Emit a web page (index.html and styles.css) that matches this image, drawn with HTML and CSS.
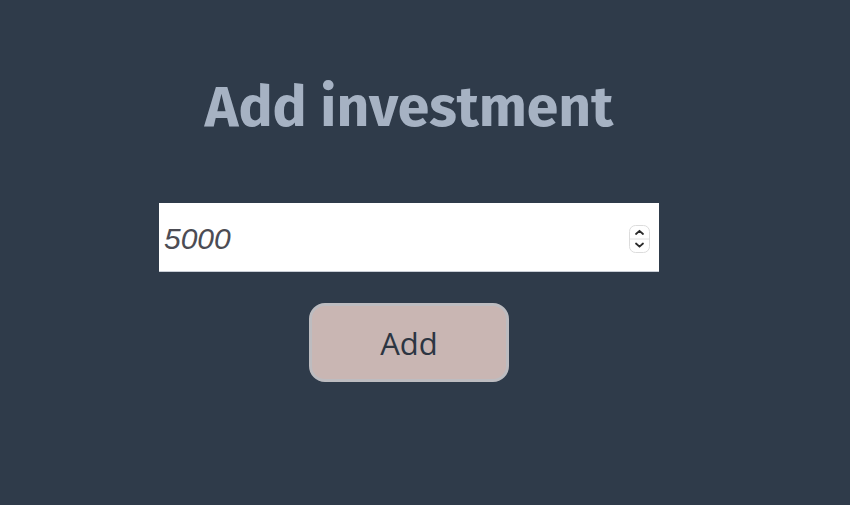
FILE: index.html
```html
<!DOCTYPE html>
<html>
<head>
<meta charset="utf-8">
<link rel="stylesheet" href="styles.css">
</head>
<body>
<main class="page">
  <h1 class="title">Add investment</h1>
  <form class="form">
    <div class="field">
      <input class="amount" type="text" value="5000">
      <span class="spinner" aria-hidden="true">
        <svg width="21" height="28" viewBox="0 0 21 28">
          <rect x="0.5" y="0.5" width="20" height="27" rx="6" fill="#fff" stroke="#dcdcdc"/>
          <line x1="1" y1="14" x2="20" y2="14" stroke="#e2e2e2"/>
          <path d="M7 9 L10.5 5.8 L14 9" fill="none" stroke="#2a2a2a" stroke-width="1.8" stroke-linecap="round" stroke-linejoin="round"/>
          <path d="M7 18.5 L10.5 21.7 L14 18.5" fill="none" stroke="#2a2a2a" stroke-width="1.8" stroke-linecap="round" stroke-linejoin="round"/>
        </svg>
      </span>
    </div>
    <button class="add" type="button">Add</button>
  </form>
</main>
</body>
</html>
```
FILE: styles.css
```css
html, body {
  margin: 0;
  padding: 0;
  background: #2f3b4a;
  height: 100%;
}
.page {
  width: 818px;
  display: flex;
  flex-direction: column;
  align-items: center;
  padding-top: 72px;
}
.title {
  margin: 0;
  font-family: "Fira Sans", "Lato", "Open Sans", sans-serif;
  font-weight: 700;
  font-size: 57px;
  line-height: 70px;
  color: #a6b2c3;
}
.form {
  display: flex;
  flex-direction: column;
  align-items: center;
  margin-top: 61px;
  gap: 31px;
}
.field {
  position: relative;
  width: 500px;
  height: 69px;
}
.amount {
  box-sizing: border-box;
  width: 500px;
  height: 69px;
  border: none;
  border-bottom: 1px solid #c9ced6;
  padding: 4px 40px 0 5px;
  background: #fff;
  font-family: "Liberation Sans", Arial, sans-serif;
  font-size: 30px;
  font-style: italic;
  color: #4c4c54;
  outline: none;
}
.spinner {
  position: absolute;
  right: 9px;
  top: 22px;
  display: flex;
}
.add {
  box-sizing: border-box;
  width: 200px;
  height: 79px;
  background: #c9b6b3;
  border: 3px solid #bdbcc0;
  border-radius: 16px;
  font-family: "Open Sans", sans-serif;
  font-size: 31px;
  color: #2c3542;
}
```
